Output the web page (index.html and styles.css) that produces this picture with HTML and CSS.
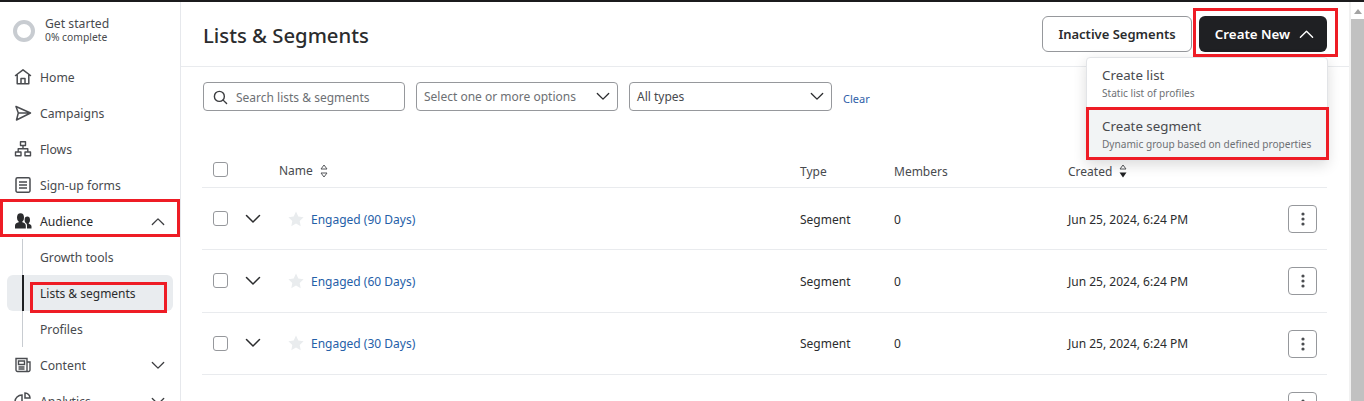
FILE: index.html
```html
<!DOCTYPE html>
<html lang="en">
<head>
<meta charset="utf-8">
<title>Lists &amp; Segments</title>
<link rel="stylesheet" href="styles.css">
</head>
<body>
<svg width="0" height="0" class="defs">
  <symbol id="chev" viewBox="0 0 16 10"><path d="M1.5 1.5 8 8l6.5-6.5" fill="none" stroke="currentColor" stroke-width="1.5" stroke-linecap="round" stroke-linejoin="round"/></symbol>
  <symbol id="chevup" viewBox="0 0 16 10"><path d="M1.5 8.5 8 2l6.5 6.5" fill="none" stroke="currentColor" stroke-width="1.5" stroke-linecap="round" stroke-linejoin="round"/></symbol>
  <symbol id="star" viewBox="0 0 16 16"><path d="M8 .6l2.3 4.9 5.3.7-3.9 3.7 1 5.3L8 12.6l-4.7 2.6 1-5.3L.4 6.2l5.3-.7z" fill="#e9ecee"/></symbol>
  <symbol id="dots" viewBox="0 0 4 14"><circle cx="2" cy="2" r="1.6" fill="#4a4c50"/><circle cx="2" cy="7" r="1.6" fill="#4a4c50"/><circle cx="2" cy="12" r="1.6" fill="#4a4c50"/></symbol>
</svg>
<div class="app">
  <aside class="sidebar">
    <div class="started">
      <span class="ring"></span>
      <div class="started-text">
        <div class="started-title">Get started</div>
        <div class="started-sub">0% complete</div>
      </div>
    </div>
    <nav class="nav">
      <a class="nav-item"><svg class="nav-icon" viewBox="0 0 18 18"><path d="M1.5 7.5 9 1.8l7.5 5.7M3.2 6.5v9.3h11.600V6.500M7 15.500v-5h4v5" fill="none" stroke="#4a4c50" stroke-width="1.500" stroke-linejoin="round" stroke-linecap="round"/></svg>Home</a>
      <a class="nav-item"><svg class="nav-icon" viewBox="0 0 18 18"><path d="M2 2.500 16.500 9 2.500 16l1.800-7zM4.500 9h12" fill="none" stroke="#4a4c50" stroke-width="1.500" stroke-linejoin="round"/></svg>Campaigns</a>
      <a class="nav-item"><svg class="nav-icon" viewBox="0 0 18 18"><path d="M6.500 1.800h5v3.700h-5zM1.500 12h5.500v3.700H1.500zM11 12h5.500v3.700H11zM9 5.500v3.200M4.200 12V8.700h9.600V12" fill="none" stroke="#4a4c50" stroke-width="1.400" stroke-linejoin="round"/></svg>Flows</a>
      <a class="nav-item"><svg class="nav-icon" viewBox="0 0 18 18"><path d="M3.500 1.800h11a1.500 1.500 0 0 1 1.500 1.500v11.400a1.500 1.500 0 0 1-1.500 1.500h-11A1.500 1.500 0 0 1 2 14.700V3.300a1.500 1.500 0 0 1 1.500-1.500zM5 6h8M5 9h8M5 12h8" fill="none" stroke="#4a4c50" stroke-width="1.500"/></svg>Sign-up forms</a>
      <a class="nav-item nav-open"><svg class="nav-icon" viewBox="0 0 18 18"><ellipse cx="6.500" cy="5.500" rx="3.500" ry="4.300" fill="#2b2c2e"/><path d="M4.700 8.500h3.600v1.700c2.300.6 3.500 1.800 3.500 3.500v2.800H1v-2.800c0-1.700 1.300-2.900 3.700-3.500z" fill="#2b2c2e"/><ellipse cx="13.300" cy="8" rx="2.700" ry="3.400" fill="#2b2c2e"/><path d="M11.900 10.500h2.800v1.300c1.700.4 2.800 1.300 2.800 2.600v2.100h-4.500v-2.800c0-1.500-.4-2.400-1.100-3z" fill="#2b2c2e"/></svg>Audience<svg class="nav-chev"><use href="#chevup"/></svg></a>
      <div class="subnav">
        <a class="sub-item">Growth tools</a>
        <a class="sub-item sub-active">Lists &amp; segments</a>
        <a class="sub-item">Profiles</a>
      </div>
      <a class="nav-item"><svg class="nav-icon" viewBox="0 0 18 18"><path d="M2 2.500h11v13H3.500A1.500 1.500 0 0 1 2 14zM13 6h3v8a1.500 1.500 0 0 1-1.500 1.500H13M4.500 5h6v3.500h-6zM4.500 11h6M4.500 13h6" fill="none" stroke="#4a4c50" stroke-width="1.400"/></svg>Content<svg class="nav-chev"><use href="#chev"/></svg></a>
      <a class="nav-item"><svg class="nav-icon" viewBox="0 0 18 18"><path d="M8 3a7 7 0 1 0 7 7H8zM11 1v5h5a5 5 0 0 0-5-5z" fill="none" stroke="#4a4c50" stroke-width="1.500"/></svg>Analytics<svg class="nav-chev"><use href="#chev"/></svg></a>
    </nav>
  </aside>
  <main class="main">
    <header class="head">
      <h1 class="title">Lists &amp; Segments</h1>
      <div class="actions">
        <button class="btn btn-ghost">Inactive Segments</button>
        <button class="btn btn-dark">Create New<svg class="btn-chev"><use href="#chevup"/></svg></button>
      </div>
    </header>
    <div class="filters">
      <label class="field search"><svg class="search-icon" viewBox="0 0 16 16"><circle cx="6.800" cy="6.800" r="5.300" fill="none" stroke="#3c3d40" stroke-width="1.500"/><path d="M10.800 10.800 14.500 14.500" stroke="#3c3d40" stroke-width="1.500" stroke-linecap="round"/></svg><span>Search lists &amp; segments</span></label>
      <div class="field select tags"><span>Select one or more options</span><svg class="sel-chev"><use href="#chev"/></svg></div>
      <div class="field select types"><span>All types</span><svg class="sel-chev"><use href="#chev"/></svg></div>
      <a class="clear">Clear</a>
    </div>
    <div class="table">
      <div class="row row-head">
        <span class="c-check"><span class="checkbox"></span></span>
        <span class="c-name">Name<svg class="sort" viewBox="0 0 8 14"><path d="M4 1 7 5H1zM4 13 1 9h6z" fill="none" stroke="#55575b" stroke-width="1"/></svg></span>
        <span class="c-type">Type</span>
        <span class="c-members">Members</span>
        <span class="c-created">Created<svg class="sort" viewBox="0 0 8 14"><path d="M4 1 7 5H1z" fill="none" stroke="#55575b" stroke-width="1"/><path d="M4 13.500.5 8.500h7z" fill="#1f2023"/></svg></span>
      </div>
      <div class="row">
        <span class="c-check"><span class="checkbox"></span></span>
        <svg class="row-chev"><use href="#chev"/></svg>
        <svg class="star"><use href="#star"/></svg>
        <a class="c-link">Engaged (90 Days)</a>
        <span class="c-type">Segment</span><span class="c-members">0</span><span class="c-created">Jun 25, 2024, 6:24 PM</span>
        <span class="more"><svg class="dots"><use href="#dots"/></svg></span>
      </div>
      <div class="row">
        <span class="c-check"><span class="checkbox"></span></span>
        <svg class="row-chev"><use href="#chev"/></svg>
        <svg class="star"><use href="#star"/></svg>
        <a class="c-link">Engaged (60 Days)</a>
        <span class="c-type">Segment</span><span class="c-members">0</span><span class="c-created">Jun 25, 2024, 6:24 PM</span>
        <span class="more"><svg class="dots"><use href="#dots"/></svg></span>
      </div>
      <div class="row">
        <span class="c-check"><span class="checkbox"></span></span>
        <svg class="row-chev"><use href="#chev"/></svg>
        <svg class="star"><use href="#star"/></svg>
        <a class="c-link">Engaged (30 Days)</a>
        <span class="c-type">Segment</span><span class="c-members">0</span><span class="c-created">Jun 25, 2024, 6:24 PM</span>
        <span class="more"><svg class="dots"><use href="#dots"/></svg></span>
      </div>
      <div class="row row-cut">
        <span class="more"><svg class="dots"><use href="#dots"/></svg></span>
      </div>
    </div>
    <div class="menu">
      <div class="menu-item"><div class="menu-title">Create list</div><div class="menu-sub">Static list of profiles</div></div>
      <div class="menu-item menu-hover"><div class="menu-title">Create segment</div><div class="menu-sub">Dynamic group based on defined properties</div></div>
    </div>
  </main>
  <div class="scrollbar"><span class="scroll-up"></span><span class="scroll-thumb"></span></div>
</div>
<span class="mark mark-audience"></span>
<span class="mark mark-lists"></span>
<span class="mark mark-create"></span>
<span class="mark mark-segment"></span>
</body>
</html>
```
FILE: styles.css
```css
* { box-sizing: border-box; }
html, body { margin: 0; height: 401px; overflow: hidden; }
body {
  position: relative;
  background: #fff;
  font-family: "Noto Sans", "Open Sans", sans-serif;
  font-size: 12px;
  color: #2b2c2e;
  border-top: 2px solid #1b1b1d;
}
.defs { position: absolute; }
.app { display: flex; height: 399px; overflow: hidden; }

.sidebar { width: 181px; flex: none; border-right: 1px solid #e6e8ec; padding-top: 14px; overflow: hidden; }
.started { display: flex; align-items: center; gap: 10px; padding-left: 13px; height: 30px; }
.started-text { margin-bottom: 2px; }
.ring { width: 22px; height: 22px; border-radius: 50%; border: 4px solid #c8ccd1; flex: none; }
.started-title { font-size: 12.200px; line-height: 15px; color: #484a4e; }
.started-sub { font-size: 10.300px; line-height: 13px; color: #484a4e; }
.nav { margin-top: 13px; }
.nav-item { display: flex; align-items: center; height: 36px; padding-left: 14px; color: #484a4e; font-size: 12.200px; position: relative; }
.nav-open { color: #2b2c2e; }
.nav-icon { width: 18px; height: 18px; margin-right: 8px; flex: none; }
.nav-chev { width: 14px; height: 9px; color: #3c3d40; position: absolute; left: 151px; top: 14px; }
.subnav { margin-left: 22px; border-left: 1px solid #c8ccd1; height: 108px; }
.sub-item { display: flex; align-items: center; height: 36px; padding-left: 17px; color: #484a4e; font-size: 12.200px; }
.sub-active { margin-left: -16px; width: 166px; padding-left: 33px; color: #2b2c2e; background: #e9ecef; border-radius: 6px; position: relative; font-size: 12px; }
.sub-active::before { content: ""; position: absolute; left: 15px; top: 0; bottom: 0; width: 2px; background: #1f2023; }

.main { flex: 1; position: relative; min-width: 0; }
.head { height: 65px; border-bottom: 1px solid #e9ebee; display: flex; align-items: center; justify-content: space-between; padding: 2px 22px 0 22px; }
.title { margin: 0; font-size: 20.300px; font-weight: 500; color: #2b2c2e; }
.actions { display: flex; gap: 7px; margin-top: -2px; }
.btn { height: 36px; border-radius: 6px; font: 600 13px "Noto Sans", sans-serif; display: flex; align-items: center; justify-content: center; }
.btn-ghost { width: 150px; background: #fff; border: 1px solid #96989c; color: #2b2c2e; }
.btn-dark { width: 128px; background: #1f2023; border: 0; color: #fff; gap: 9px; font-size: 13.300px; padding: 0 0 0 3px; }
.btn-chev { width: 15px; height: 10px; }

.filters { display: flex; align-items: flex-start; margin-top: 15px; padding-left: 22px; height: 30px; }
.field { height: 29px; border: 1px solid #96989c; border-radius: 4px; display: flex; align-items: center; color: #6d7074; font-size: 12px; position: relative; }
.search { width: 202px; padding: 1px 0 0 9px; gap: 8px; margin-right: 11px; }
.search-icon { width: 15px; height: 15px; flex: none; }
.select { padding-left: 7px; }
.tags { width: 202px; margin-right: 11px; }
.types { width: 203px; color: #484a4e; margin-right: 11px; }
.sel-chev { width: 14px; height: 9px; color: #2b2c2e; position: absolute; right: 7px; top: 9px; }
.clear { font-size: 11px; color: #2f5fa8; margin-top: 9px; }

.table { margin: 37px 0 0 21px; width: 1125px; }
.row { display: flex; align-items: center; height: 62.300px; border-bottom: 1px solid #e9ebee; position: relative; color: #2b2c2e; }
.row-head { height: 39px; padding-top: 5px; color: #484a4e; }
.row-cut { border-bottom: 0; }
.c-check { width: 32px; padding-left: 11px; flex: none; display: flex; }
.checkbox { width: 15px; height: 15px; border: 1px solid #96989c; border-radius: 3px; display: block; }
.row-head .c-check { margin-bottom: 2px; }
.row-chev { width: 16px; height: 10px; color: #2b2c2e; margin-left: 11px; flex: none; }
.star { width: 16px; height: 16px; margin-left: 27px; flex: none; }
.c-name { margin-left: 45px; width: 521px; flex: none; display: flex; align-items: center; }
.c-link { margin-left: 7px; width: 489px; flex: none; color: #2560a8; padding-top: 1px; }
.c-type { width: 94px; flex: none; padding-top: 1px; }
.c-members { width: 174px; flex: none; padding-top: 1px; }
.c-created { flex: none; display: flex; align-items: center; padding-top: 1px; }
.sort { width: 8px; height: 14px; margin-left: 7px; }
.more { position: absolute; left: 1086px; top: 17px; width: 29px; height: 28px; border: 1px solid #96989c; border-radius: 4px; display: flex; align-items: center; justify-content: center; background: #fff; }
.dots { width: 4px; height: 14px; }

.menu { position: absolute; left: 905px; top: 55px; width: 242px; background: #fff; border: 1px solid #e2e4e7; border-radius: 4px; box-shadow: 0 4px 14px rgba(0,0,0,.14); }
.menu-item { height: 51px; padding: 7px 15px 0; }
.menu-hover { background: #f2f4f5; }
.menu-title { font-size: 13.300px; line-height: 20px; color: #484a4e; }
.menu-sub { font-size: 10.100px; line-height: 14px; color: #6d7074; margin-top: 1px; }

.scrollbar { width: 15px; flex: none; background: #fff; border-left: 2px solid #f1f1f1; position: relative; }
.scroll-thumb { position: absolute; left: 0; right: 0; top: 17px; bottom: 0; background: #c1c1c1; }
.scroll-up { position: absolute; left: 3px; top: 7px; border: 4px solid transparent; border-top: 0; border-bottom: 5px solid #a3a3a3; }

.mark { position: absolute; border: 3px solid #ee1c25; pointer-events: none; }
.mark-audience { left: 0; top: 197px; width: 180px; height: 38px; }
.mark-lists { left: 30px; top: 280px; width: 137px; height: 31px; }
.mark-create { left: 1193px; top: 6px; width: 145px; height: 49px; }
.mark-segment { left: 1086px; top: 105px; width: 243px; height: 53px; }
```
